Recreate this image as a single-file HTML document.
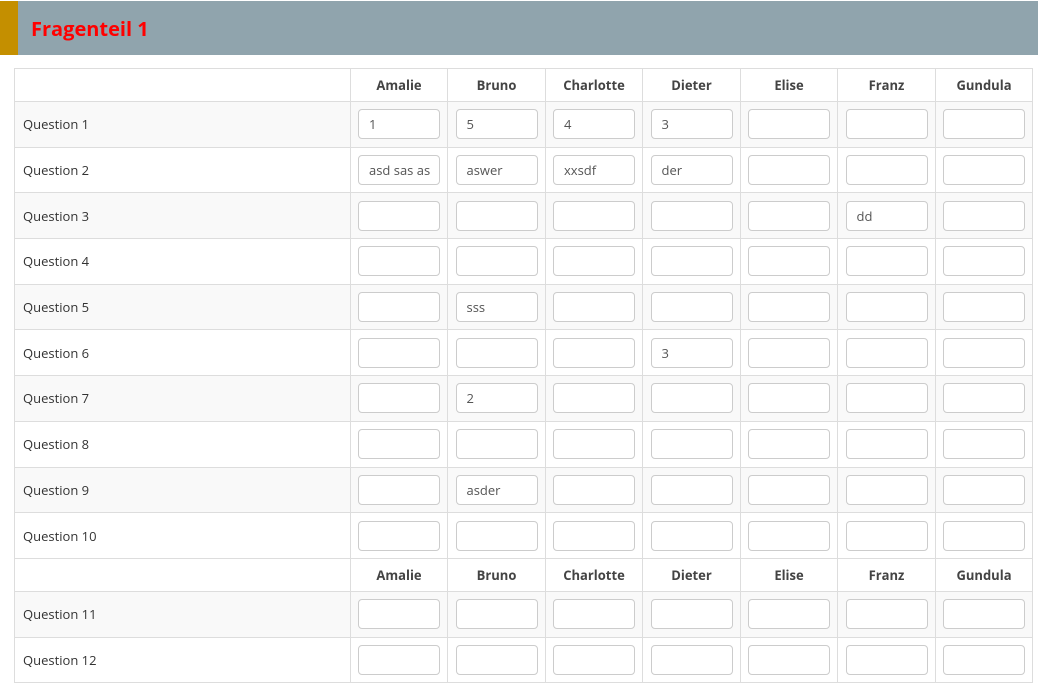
<!DOCTYPE html>
<html><head><meta charset="utf-8"><style>
*{box-sizing:border-box}
body{margin:0;background:#fff;font-family:"Open Sans","Liberation Sans",sans-serif;width:1038px;height:659px;overflow:hidden;position:relative}
.hdr{position:absolute;left:0;top:1px;width:1038px;height:54px;background:#90a4ad;border-left:18px solid #c48f00}
.hdr h1{margin:0;position:absolute;left:13px;top:14px;font-size:20px;font-weight:bold;color:#f00}
table{position:absolute;left:14px;top:68px;border-collapse:collapse;table-layout:fixed;width:1018px}
td,th{border:1px solid #ddd;padding:0;font-size:13px;color:#333}
th{height:33px;font-weight:bold;text-align:center;color:#444}
td{height:45.7px}
td.q{padding-left:8px}
tr.s td{background:#f9f9f9}
td.c{text-align:center}
.i{display:inline-block;width:82px;height:30px;border:1px solid #ccc;border-radius:4px;background:#fff;text-align:left;padding:5px 0 0 10px;font-size:13px;color:#555;vertical-align:middle}
</style></head><body>
<div class="hdr"><h1>Fragenteil 1</h1></div>
<table>
<colgroup><col style="width:336px"><col style="width:97px"><col style="width:98px"><col style="width:97px"><col style="width:98px"><col style="width:97px"><col style="width:98px"><col style="width:97px"></colgroup>
<tr><th></th><th>Amalie</th><th>Bruno</th><th>Charlotte</th><th>Dieter</th><th>Elise</th><th>Franz</th><th>Gundula</th></tr>
<tr class="s"><td class="q">Question 1</td><td class="c"><span class="i">1</span></td><td class="c"><span class="i">5</span></td><td class="c"><span class="i">4</span></td><td class="c"><span class="i">3</span></td><td class="c"><span class="i"></span></td><td class="c"><span class="i"></span></td><td class="c"><span class="i"></span></td></tr>
<tr><td class="q">Question 2</td><td class="c"><span class="i">asd sas as</span></td><td class="c"><span class="i">aswer</span></td><td class="c"><span class="i">xxsdf</span></td><td class="c"><span class="i">der</span></td><td class="c"><span class="i"></span></td><td class="c"><span class="i"></span></td><td class="c"><span class="i"></span></td></tr>
<tr class="s"><td class="q">Question 3</td><td class="c"><span class="i"></span></td><td class="c"><span class="i"></span></td><td class="c"><span class="i"></span></td><td class="c"><span class="i"></span></td><td class="c"><span class="i"></span></td><td class="c"><span class="i">dd</span></td><td class="c"><span class="i"></span></td></tr>
<tr><td class="q">Question 4</td><td class="c"><span class="i"></span></td><td class="c"><span class="i"></span></td><td class="c"><span class="i"></span></td><td class="c"><span class="i"></span></td><td class="c"><span class="i"></span></td><td class="c"><span class="i"></span></td><td class="c"><span class="i"></span></td></tr>
<tr class="s"><td class="q">Question 5</td><td class="c"><span class="i"></span></td><td class="c"><span class="i">sss</span></td><td class="c"><span class="i"></span></td><td class="c"><span class="i"></span></td><td class="c"><span class="i"></span></td><td class="c"><span class="i"></span></td><td class="c"><span class="i"></span></td></tr>
<tr><td class="q">Question 6</td><td class="c"><span class="i"></span></td><td class="c"><span class="i"></span></td><td class="c"><span class="i"></span></td><td class="c"><span class="i">3</span></td><td class="c"><span class="i"></span></td><td class="c"><span class="i"></span></td><td class="c"><span class="i"></span></td></tr>
<tr class="s"><td class="q">Question 7</td><td class="c"><span class="i"></span></td><td class="c"><span class="i">2</span></td><td class="c"><span class="i"></span></td><td class="c"><span class="i"></span></td><td class="c"><span class="i"></span></td><td class="c"><span class="i"></span></td><td class="c"><span class="i"></span></td></tr>
<tr><td class="q">Question 8</td><td class="c"><span class="i"></span></td><td class="c"><span class="i"></span></td><td class="c"><span class="i"></span></td><td class="c"><span class="i"></span></td><td class="c"><span class="i"></span></td><td class="c"><span class="i"></span></td><td class="c"><span class="i"></span></td></tr>
<tr class="s"><td class="q">Question 9</td><td class="c"><span class="i"></span></td><td class="c"><span class="i">asder</span></td><td class="c"><span class="i"></span></td><td class="c"><span class="i"></span></td><td class="c"><span class="i"></span></td><td class="c"><span class="i"></span></td><td class="c"><span class="i"></span></td></tr>
<tr><td class="q">Question 10</td><td class="c"><span class="i"></span></td><td class="c"><span class="i"></span></td><td class="c"><span class="i"></span></td><td class="c"><span class="i"></span></td><td class="c"><span class="i"></span></td><td class="c"><span class="i"></span></td><td class="c"><span class="i"></span></td></tr>
<tr><th></th><th>Amalie</th><th>Bruno</th><th>Charlotte</th><th>Dieter</th><th>Elise</th><th>Franz</th><th>Gundula</th></tr>
<tr class="s"><td class="q">Question 11</td><td class="c"><span class="i"></span></td><td class="c"><span class="i"></span></td><td class="c"><span class="i"></span></td><td class="c"><span class="i"></span></td><td class="c"><span class="i"></span></td><td class="c"><span class="i"></span></td><td class="c"><span class="i"></span></td></tr>
<tr><td class="q">Question 12</td><td class="c"><span class="i"></span></td><td class="c"><span class="i"></span></td><td class="c"><span class="i"></span></td><td class="c"><span class="i"></span></td><td class="c"><span class="i"></span></td><td class="c"><span class="i"></span></td><td class="c"><span class="i"></span></td></tr>
</table>
</body></html>
